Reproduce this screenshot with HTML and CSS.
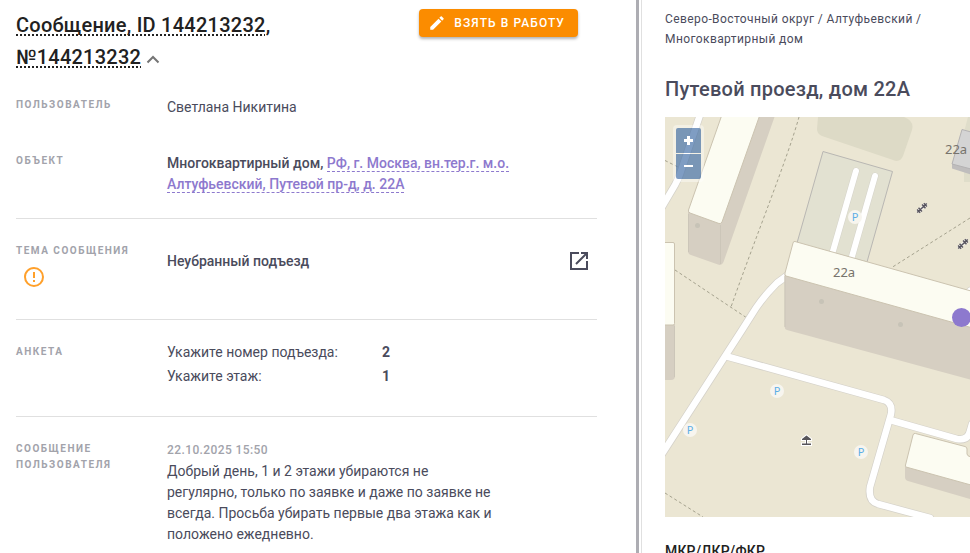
FILE: index.html
```html
<!DOCTYPE html>
<html lang="ru">
<head>
<meta charset="utf-8">
<meta name="viewport" content="width=device-width, initial-scale=1">
<title>Сообщение, ID 144213232</title>
<link rel="stylesheet" href="styles.css">
</head>
<body>
<div class="layout">
  <main class="message">
    <header class="message-head">
      <h1 class="title"><span class="title-copy">Сообщение, ID 144213232</span>, <span class="title-copy">№144213232</span>
        <button class="collapse" type="button" aria-label="Свернуть"><svg viewBox="5 5 14 14" width="14" height="14"><path d="M6.500 15.500 12 10l5.500 5.500" fill="none" stroke="currentColor" stroke-width="2"/></svg></button>
      </h1>
      <button class="take" type="button"><svg viewBox="0 0 24 24" width="18" height="18"><path d="M20.71 7.04c.39-.39.39-1.04 0-1.41l-2.34-2.34c-.37-.39-1.02-.39-1.41 0l-1.84 1.83 3.75 3.75M3 17.25V21h3.75L17.81 9.93l-3.75-3.75L3 17.25z"/></svg>Взять в работу</button>
    </header>

    <section class="section people">
      <div class="row">
        <h2 class="label">Пользователь</h2>
        <p class="value">Светлана Никитина</p>
      </div>
      <div class="row">
        <h2 class="label">Объект</h2>
        <p class="value strong">Многоквартирный дом, <a class="address" href="#">РФ, г. Москва, вн.тер.г. м.о. Алтуфьевский, Путевой пр-д, д. 22А</a></p>
      </div>
    </section>

    <section class="section row">
      <div>
        <h2 class="label">Тема сообщения</h2>
        <svg class="alert" viewBox="0 0 24 24" width="24" height="24"><path d="M11 15h2v2h-2v-2m0-8h2v6h-2V7m1-5C6.47 2 2 6.5 2 12a10 10 0 0 0 10 10 10 10 0 0 0 10-10A10 10 0 0 0 12 2m0 18a8 8 0 0 1-8-8 8 8 0 0 1 8-8 8 8 0 0 1 8 8 8 8 0 0 1-8 8z"/></svg>
      </div>
      <div class="topic">
        <p class="strong">Неубранный подъезд</p>
        <button class="open" type="button" aria-label="Открыть"><svg viewBox="0 0 24 24" width="24" height="24"><path d="M12 4H4v16h16v-8M9 15 19.500 4.500M14 4h6v6" fill="none" stroke="currentColor" stroke-width="2"/></svg></button>
      </div>
    </section>

    <section class="section row">
      <h2 class="label">Анкета</h2>
      <dl class="form-data">
        <dt>Укажите номер подъезда:</dt><dd>2</dd>
        <dt>Укажите этаж:</dt><dd>1</dd>
      </dl>
    </section>

    <section class="section row">
      <h2 class="label">Сообщение пользователя</h2>
      <div class="user-text">
        <time datetime="2025-10-22T15:50">22.10.2025 15:50</time>
        <p>Добрый день, 1 и 2 этажи убираются не регулярно, только по заявке и даже по заявке не всегда. Просьба убирать первые два этажа как и положено ежедневно.</p>
      </div>
    </section>
  </main>

  <aside class="object">
    <p class="crumbs">Северо-Восточный округ / Алтуфьевский / Многоквартирный дом</p>
    <h2 class="object-title">Путевой проезд, дом 22А</h2>
    <div class="map">
      <svg class="map-canvas" viewBox="665 117 305 400" preserveAspectRatio="xMinYMin slice" role="img" aria-label="Карта">
        <defs>
          <g id="parking"><circle r="7" fill="#f7f5ef"/><text class="parking-mark" text-anchor="middle" y="4">P</text></g>
          <g id="sport" transform="rotate(-43)"><path d="M-6 0H6M-4.500-2v4M-2.500-2v4M2.500-2v4M4.500-2v4" stroke="#f7f5ef" stroke-width="3"/><path d="M-6.500 0H6.500M-4.600-2.200v4.400M-2.400-2.500v5M2.400-2.500v5M4.600-2.200v4.400" stroke="#595660" stroke-width="1.500"/></g>
        </defs>
        <rect x="665" y="117" width="305" height="400" fill="#ebe6d3"/>
        <path d="M818 117 817 129Q817 134 822 136L893 160Q900 163 903 156L912 130Q914 123 908 119L904 117z" fill="#dddac6"/>
        <path d="M968 117 964 132v50h6v-65z" fill="#dfddca"/>
        <path d="M823 151.500 892.500 171.500 867 262 797 243z" fill="#e2e1d1" stroke="#b9b7b3"/>
        <g fill="none" stroke="#a5a28e" stroke-dasharray="3 2.500">
          <path d="M665 160.500 680 168M799 117C787 160 757 233 731 307M675 270 747 318M970 218 891 268M665 493 703 517"/>
        </g>
        <g fill="none" stroke-linecap="round" stroke-linejoin="round">
          <g stroke="#d5d2ca" stroke-width="8">
            <path d="M701 112 681 171Q679 178 675 185L662 207"/>
            <path d="M788 275 777 283Q764 296 756 308L742 330 662 454"/>
            <path d="M727 356.500 884 400Q893 403 891 414L870 487Q868 501 878 504L930 518"/>
            <path d="M890 420 957 439Q968 441 970 431L972 424"/>
            <path d="M970 291 976 288"/>
          </g>
          <g stroke="#fff" stroke-width="6.500">
            <path d="M701 112 681 171Q679 178 675 185L662 207"/>
            <path d="M788 275 777 283Q764 296 756 308L742 330 662 454"/>
            <path d="M727 356.500 884 400Q893 403 891 414L870 487Q868 501 878 504L930 518"/>
            <path d="M890 420 957 439Q968 441 970 431L972 424"/>
            <path d="M970 291 976 288"/>
          </g>
          <path d="M856 171 833 251M875 176 851 260" stroke="#d5d3ca" stroke-width="7"/>
          <path d="M856 171 833 251M875 176 851 260" stroke="#fff" stroke-width="6"/>
        </g>
        <g fill="#d6cfc2">
          <path d="M688 211V251Q688 254 691 255L718 264.500Q722 266 723.500 262L774.500 117H759z"/>
          <path d="M665 324H675V376Q675 380 671 380H665z"/>
          <path d="M784.500 274V326Q784.500 329 787 330L970 379.500V326z"/>
          <path d="M905 466V477Q905 480 908 481L970 499V484z"/>
        </g>
        <path d="M688.500 214v38M720.500 225v39M674.500 326v51M785 276v51" stroke="#ccc6b9" fill="none"/>
        <g fill="#fcfcf2" stroke="#cbc3b0" stroke-linejoin="round">
          <path d="M721.500 116 688.500 210Q688 212 690 213L719 223.500Q721 224 722 222L759.500 116z"/>
          <path d="M664 242.500H673Q674.500 242.500 674.500 244V323.500Q674.500 325 673 325H664z"/>
          <path d="M795 241.500 971 291V327.500L786 276Q784.500 275.500 785 273L793 243Q793.500 241 795 241.500z"/>
          <path d="M915.500 433.500 965 446.500Q967 447 967 449V454Q967 456 971 457V485L906 467Q905 466.500 905.500 465L913 435Q913.500 433 915.500 433.500z"/>
        </g>
        <path d="M952 163 971 168V174.500L952 168.500z" fill="#bfbdbd"/>
        <path d="M962 129.500 971 132V169L952 164z" fill="#d4d4d4" stroke="#b4b2b3"/>
        <g fill="#c7c3b7"><circle cx="697.500" cy="225.500" r="2.500"/><circle cx="821.500" cy="301.500" r="2.500"/><circle cx="900.500" cy="324.500" r="2.500"/></g>
        <g class="house-number"><text x="945" y="154">22a с</text><text x="833" y="277">22a</text></g>
        <use href="#parking" x="855" y="217"/><use href="#parking" x="777" y="391"/><use href="#parking" x="690" y="430"/><use href="#parking" x="861" y="452"/>
        <use href="#sport" transform="translate(922 208)"/><use href="#sport" transform="translate(963 244)"/>
        <path d="M806.500 435.500 811 439V440H807V443.500H811V445H802V443.500H806V440H802V439z" fill="#57555a" stroke="#fff" stroke-width="2" paint-order="stroke"/>
        <circle cx="961.500" cy="317.500" r="9.500" fill="#8d79ce"/>
      </svg>
      <div class="map-zoom">
        <button type="button" aria-label="Приблизить"><svg viewBox="0 0 25 25" width="25" height="25"><path d="M12.500 8v9M8 12.500h9" stroke="currentColor" stroke-width="3"/></svg></button>
        <button type="button" aria-label="Отдалить"><svg viewBox="0 0 25 25" width="25" height="25"><path d="M8 12h9" stroke="currentColor" stroke-width="2"/></svg></button>
      </div>
    </div>
    <h3 class="object-subtitle">МКР/ЛКР/ФКР</h3>
  </aside>
</div>
</body>
</html>
```
FILE: styles.css
```css
* { box-sizing: border-box; }

body {
  margin: 0;
  background: #fff;
  color: #4a4b5c;
  font: 14px/21px Roboto, sans-serif;
}

h1, h2, h3, p, dl, dd { margin: 0; }

button {
  border: 0;
  padding: 0;
  background: none;
  font: inherit;
  color: inherit;
  cursor: pointer;
}

svg { display: block; fill: currentColor; }

.layout {
  display: grid;
  grid-template-columns: minmax(0, 1fr) 329px;
  column-gap: 2px;
  height: 100vh;
  overflow: hidden;
}

.message {
  padding: 9px 39px 0 16px;
  border-right: 3px solid #adadb3;
  overflow: hidden;
}

.message-head {
  display: flex;
  justify-content: space-between;
  align-items: flex-start;
  padding-right: 19px;
}

.title {
  max-width: 320px;
  color: #212121;
  font-size: 20px;
  font-weight: 500;
  line-height: 32px;
  letter-spacing: 0.0125em;
}

.title-copy {
  text-decoration: underline dotted 2px;
  text-underline-offset: 2px;
  text-decoration-skip-ink: none;
}

.collapse {
  display: inline-block;
  vertical-align: middle;
  color: #757575;
}

.take {
  display: flex;
  align-items: center;
  gap: 8px;
  height: 28px;
  padding: 0 13px 0 9px;
  border-radius: 4px;
  background: #fb8c00;
  box-shadow: 0 2px 3px rgba(0, 0, 0, 0.3);
  color: #fff;
  font-size: 12px;
  font-weight: 500;
  letter-spacing: 0.0892857em;
  text-transform: uppercase;
  white-space: nowrap;
}

.section { padding: 23px 0; }
.section + .section { border-top: 1px solid #e0e0e0; }

.people { display: grid; gap: 34px; }

.row {
  display: grid;
  grid-template-columns: 151px minmax(0, 1fr);
}

.label {
  max-width: 120px;
  padding-top: 1px;
  color: #a2a3ab;
  font-size: 10px;
  font-weight: 700;
  line-height: 16px;
  letter-spacing: 0.15em;
  text-transform: uppercase;
}

.value { max-width: 360px; padding-top: 1px; }
.strong { font-weight: 500; }

.address {
  color: #8d79ce;
  text-decoration: none;
  border-bottom: 1px dashed #8d79ce;
}

.alert { margin: 6px 0 7px 6px; color: #ffa02b; }

.topic {
  display: flex;
  justify-content: space-between;
  align-items: center;
  height: 24px;
  margin-top: 7px;
  padding-right: 6px;
}

.form-data {
  display: grid;
  grid-template-columns: 215px 1fr;
  grid-auto-rows: 18px;
  row-gap: 6px;
  align-content: start;
  min-height: 50px;
  line-height: 18px;
}

.form-data dd { font-weight: 700; }

.user-text { max-width: 328px; }
.user-text time {
  display: block;
  color: #a2a3ab;
  font-size: 12px;
  font-weight: 500;
  letter-spacing: 0.0333333em;
}

.object {
  padding: 9px 0 0 23px;
  border-left: 1px solid #e0e0e0;
  overflow: hidden;
}

.crumbs {
  max-width: 280px;
  font-size: 12px;
  line-height: 20px;
  letter-spacing: 0.0333333em;
}

.object-title {
  margin: 24px 0 12px;
  font-size: 20px;
  font-weight: 500;
  line-height: 32px;
  letter-spacing: 0.0125em;
}

.map { position: relative; height: 400px; overflow: hidden; }
.map-canvas { width: 100%; height: 100%; }

.house-number { fill: #77736c; font: 13px "Noto Sans", sans-serif; }
.parking-mark { fill: #5eaee6; font: 11px "Noto Sans", sans-serif; }

.map-zoom {
  position: absolute;
  top: 8px;
  left: 8px;
  display: grid;
  gap: 1px;
  padding: 3px;
  border-radius: 4px;
  background: rgba(255, 255, 255, 0.4);
}

.map-zoom button { background: rgba(0, 60, 136, 0.5); color: #fff; }
.map-zoom button:first-child { border-radius: 2px 2px 0 0; }
.map-zoom button:last-child { border-radius: 0 0 2px 2px; }

.object-subtitle {
  margin-top: 24px;
  color: #212121;
  font-size: 14px;
  font-weight: 500;
  letter-spacing: 0.0125em;
}
```
